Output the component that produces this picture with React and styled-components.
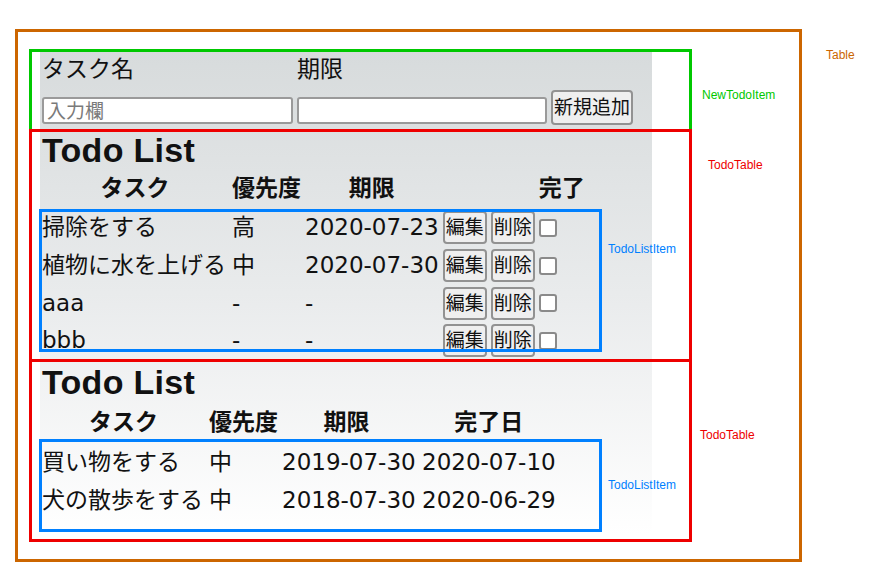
import React from "react";
import styled, { createGlobalStyle } from "styled-components";

const GlobalStyle = createGlobalStyle`
  * { box-sizing: border-box; }
  body {
    margin: 0;
    background: #fff;
    font-family: "Liberation Sans", Arial, sans-serif;
  }
`;

const Canvas = styled.div`
  position: relative;
  width: 891px;
  height: 581px;
  display: flex;
  align-items: flex-start;
  padding: 29px 0 0 15px;
  overflow: hidden;
`;

const Frame = styled.div`
  flex-shrink: 0;
  width: 787px;
  height: 533px;
  border: 3px solid #cc6600;
  padding: 20px 0 0 22px;
`;

const FrameLabel = styled.div`
  margin: 19px 0 0 24px;
  font-size: 12px;
  line-height: 14px;
  color: #cc6600;
`;

const Panel = styled.div`
  width: 612px;
  height: 483px;
  background: linear-gradient(to bottom, #d7dbdc 0%, #e9ebec 50%, #ffffff 100%);
  color: #111;
  font-family: "DejaVu Sans", "Noto Sans CJK JP", sans-serif;
  font-size: 23px;
  line-height: 31px;
`;

const FormTable = styled.table`
  border-spacing: 0;
`;

const LabelCell = styled.td`
  padding: 2px 2px 3px;
  text-align: left;
  white-space: nowrap;
`;

const FieldCell = styled.td`
  padding: 2px;
  vertical-align: bottom;
`;

const TextInput = styled.input`
  display: block;
  width: ${(p) => p.$w}px;
  height: 27px;
  margin: 0 0 1px;
  padding: 0 3px;
  border: 2px solid #9a9a9a;
  border-radius: 3px;
  background: #fff;
  font-family: "DejaVu Sans", "Noto Sans CJK JP", sans-serif;
  font-size: 19px;
  color: #111;
  &::placeholder { color: #7a7a7a; }
`;

const Button = styled.button`
  display: block;
  height: ${(p) => (p.$tall ? 35 : 33)}px;
  margin: 0;
  padding: 0 1px;
  border: 2px solid #929292;
  border-radius: 4px;
  background: #efefef;
  color: #111;
  font-family: "DejaVu Sans", "Noto Sans CJK JP", sans-serif;
  font-size: 19px;
  line-height: 1;
  white-space: nowrap;
`;

const Check = styled.input.attrs({ type: "checkbox" })`
  appearance: none;
  display: block;
  width: 18px;
  height: 18px;
  margin: 0;
  border: 2px solid #8a8a8a;
  border-radius: 3px;
  background: #fff;
`;

const Title = styled.h2`
  margin: ${(p) => p.$top}px 0 ${(p) => p.$bottom ?? 0}px 2px;
  font-family: "Liberation Sans", Arial, sans-serif;
  font-weight: 700;
  font-size: 34px;
  line-height: 34px;
  letter-spacing: 0.3px;
  color: #111;
`;

const ListTable = styled.table`
  border-spacing: 0;
`;

const HeadRow = styled.tr`
  height: 42px;
`;

const BodyRow = styled.tr`
  height: 37.7px;
`;

const Th = styled.th`
  box-sizing: content-box;
  width: ${(p) => p.$w}px;
  padding: 0 ${(p) => p.$pr ?? 2}px 0 2px;
  font-family: "DejaVu Sans", "Noto Sans CJK JP", sans-serif;
  font-weight: 700;
  text-align: center;
  white-space: nowrap;
  vertical-align: middle;
`;

const Td = styled.td`
  padding: 0 2px;
  text-align: left;
  white-space: nowrap;
  vertical-align: middle;
`;

const Annotation = styled.div`
  position: absolute;
  left: ${(p) => p.$x}px;
  top: ${(p) => p.$y}px;
  width: ${(p) => p.$w}px;
  height: ${(p) => p.$h}px;
  border: 3px solid ${(p) => p.$c};
  pointer-events: none;
`;

const AnnotationLabel = styled.span`
  position: absolute;
  left: calc(100% + ${(p) => p.$dx}px);
  top: ${(p) => p.$dy - 7}px;
  font-size: 12px;
  line-height: 14px;
  white-space: nowrap;
  color: ${(p) => p.$c};
`;

const todos = [
  { task: "掃除をする", priority: "高", due: "2020-07-23" },
  { task: "植物に水を上げる", priority: "中", due: "2020-07-30" },
  { task: "aaa", priority: "-", due: "-" },
  { task: "bbb", priority: "-", due: "-" },
];

const finished = [
  { task: "買い物をする", priority: "中", due: "2019-07-30", doneAt: "2020-07-10" },
  { task: "犬の散歩をする", priority: "中", due: "2018-07-30", doneAt: "2020-06-29" },
];

const notes = [
  { c: "#00c800", x: 29, y: 49, w: 663, h: 83, label: "NewTodoItem", dx: 13, dy: 43 },
  { c: "#ee0000", x: 29, y: 129, w: 663, h: 233, label: "TodoTable", dx: 19, dy: 33 },
  { c: "#0080ff", x: 39, y: 209, w: 563, h: 143, label: "TodoListItem", dx: 9, dy: 37 },
  { c: "#ee0000", x: 29, y: 359, w: 663, h: 183, label: "TodoTable", dx: 11, dy: 73 },
  { c: "#0080ff", x: 39, y: 439, w: 563, h: 93, label: "TodoListItem", dx: 9, dy: 43 },
];

const NewTodoItem = () => (
  <FormTable>
    <tbody>
      <tr>
        <LabelCell>タスク名</LabelCell>
        <LabelCell>期限</LabelCell>
        <LabelCell />
      </tr>
      <tr>
        <FieldCell>
          <TextInput $w={251} placeholder="入力欄" />
        </FieldCell>
        <FieldCell>
          <TextInput $w={250} />
        </FieldCell>
        <FieldCell>
          <Button $tall>新規追加</Button>
        </FieldCell>
      </tr>
    </tbody>
  </FormTable>
);

const TodoTable = () => (
  <>
    <Title $top={6}>Todo List</Title>
    <ListTable>
      <tbody>
        <HeadRow>
          <Th $w={186}>タスク</Th>
          <Th $w={68}>優先度</Th>
          <Th $w={132}>期限</Th>
          <Th $w={44} />
          <Th $w={43} />
          <Th $w={45}>完了</Th>
        </HeadRow>
        {todos.map((t) => (
          <BodyRow key={t.task}>
            <Td>{t.task}</Td>
            <Td>{t.priority}</Td>
            <Td>{t.due}</Td>
            <Td><Button>編集</Button></Td>
            <Td><Button>削除</Button></Td>
            <Td><Check /></Td>
          </BodyRow>
        ))}
      </tbody>
    </ListTable>
  </>
);

const DoneTable = () => (
  <>
    <Title $top={5} $bottom={3}>Todo List</Title>
    <ListTable>
      <tbody>
        <HeadRow>
          <Th $w={163}>タスク</Th>
          <Th $w={69}>優先度</Th>
          <Th $w={129} $pr={9}>期限</Th>
          <Th $w={129}>完了日</Th>
        </HeadRow>
        {finished.map((t) => (
          <BodyRow key={t.task}>
            <Td>{t.task}</Td>
            <Td>{t.priority}</Td>
            <Td>{t.due}</Td>
            <Td>{t.doneAt}</Td>
          </BodyRow>
        ))}
      </tbody>
    </ListTable>
  </>
);

const App = () => (
  <>
    <GlobalStyle />
    <Canvas>
      <Frame>
        <Panel>
          <NewTodoItem />
          <TodoTable />
          <DoneTable />
        </Panel>
      </Frame>
      <FrameLabel>Table</FrameLabel>
      {notes.map((n, i) => (
        <Annotation key={i} $c={n.c} $x={n.x} $y={n.y} $w={n.w} $h={n.h}>
          <AnnotationLabel $c={n.c} $dx={n.dx} $dy={n.dy}>
            {n.label}
          </AnnotationLabel>
        </Annotation>
      ))}
    </Canvas>
  </>
);

export default App;
